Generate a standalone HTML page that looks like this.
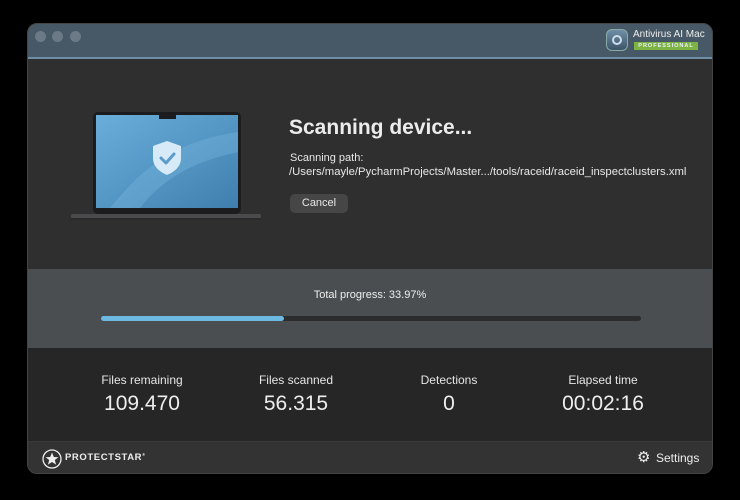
<!DOCTYPE html>
<html><head><style>
*{margin:0;padding:0;box-sizing:border-box}
body{width:740px;height:500px;background:#000;font-family:"Liberation Sans",sans-serif;color:#e8e8e8;position:relative;overflow:hidden}
.win{position:absolute;left:27px;top:23px;width:686px;height:451px;border-radius:10px;overflow:hidden;background:#2f2f2f;border:1px solid #444}
.title{position:absolute;left:0;top:0;width:100%;height:35px;background:#475966;border-bottom:2px solid #6d8ea6}
.dot{position:absolute;top:7px;width:11px;height:11px;border-radius:50%;background:#6b7a86}
.main{position:absolute;top:37px;left:0;width:100%;height:208px;background:#2f2f2f}
.prog{position:absolute;top:245px;left:0;width:100%;height:79px;background:#4a4e51}
.stats{position:absolute;top:324px;left:0;width:100%;height:93px;background:#262626}
.foot{position:absolute;top:417px;left:0;width:100%;height:34px;background:#333;border-top:1px solid #3a3a3a}
.col{position:absolute;top:25px;width:160px;text-align:center}
.col .l{font-size:12px;color:#e6e6e6}
.col .v{font-size:21px;margin-top:5px;color:#eee}
</style></head><body>
<div class="win">
 <div class="title">
  <div class="dot" style="left:7px"></div><div class="dot" style="left:24px"></div><div class="dot" style="left:42px"></div>
  <div style="position:absolute;left:578px;top:5px;width:22px;height:22px;border-radius:6px;background:linear-gradient(#6f8ea6,#3c5466);border:1px solid #8aa"></div>
  <div style="position:absolute;left:584px;top:11px;width:10px;height:10px;border-radius:50%;border:2px solid #cde"></div>
  <div style="position:absolute;left:605px;top:5px;font-size:10px;color:#eee">Antivirus AI Mac</div>
  <div style="position:absolute;left:606px;top:18px;width:64px;height:8px;background:#7cb342;color:#eef;font-size:5.5px;font-weight:bold;letter-spacing:1px;text-align:center;line-height:8px">PROFESSIONAL</div>
 </div>
 <div class="main">
  <svg style="position:absolute;left:42px;top:51px" width="192" height="112" viewBox="0 0 192 112">
   <defs><linearGradient id="g" x1="0" y1="0" x2="1" y2="1"><stop offset="0" stop-color="#6aaedb"/><stop offset="1" stop-color="#3f7fae"/></linearGradient></defs>
   <rect x="23" y="0" width="148" height="102" rx="5" fill="#1c1c1e"/>
   <rect x="26" y="3" width="142" height="93" fill="url(#g)"/>
   <path d="M40 96 C70 60 100 30 168 20 L168 40 C120 50 90 70 70 96Z" fill="#7ab9e2" opacity=".35"/>
   <rect x="89" y="3" width="17" height="4" fill="#1c1c1e"/>
   <rect x="1" y="102" width="190" height="5" rx="2" fill="#4a4a4d"/>
   <rect x="1" y="106" width="190" height="2" fill="#2a2a2a"/>
   <path d="M97 29 L111 34 V46 C111 55 104 60 97 63 C90 60 83 55 83 46 V34Z" fill="#d6eaf7"/>
   <path d="M91 46 L96 51 L104 42" fill="none" stroke="#5c9ccb" stroke-width="3" stroke-linecap="round" stroke-linejoin="round"/>
  </svg>
  <div style="position:absolute;left:261px;top:55px;font-size:21px;font-weight:bold;color:#ececec">Scanning device...</div>
  <div style="position:absolute;left:262px;top:91px;font-size:11px">Scanning path:</div>
  <div style="position:absolute;left:261px;top:105px;font-size:11.3px;white-space:nowrap">/Users/mayle/PycharmProjects/Master.../tools/raceid/raceid_inspectclusters.xml</div>
  <div style="position:absolute;left:262px;top:133px;width:58px;height:19px;border-radius:5px;background:#464646;font-size:11px;text-align:center;line-height:19px">Cancel</div>
 </div>
 <div class="prog">
  <div style="position:absolute;left:0;width:100%;top:20px;text-align:center;font-size:11px;color:#eee">Total progress: 33.97%</div>
  <div style="position:absolute;left:73px;top:47px;width:540px;height:5px;border-radius:3px;background:#2c2c2c"></div>
  <div style="position:absolute;left:73px;top:47px;width:183px;height:5px;border-radius:3px;background:#6cb9e2"></div>
 </div>
 <div class="stats">
  <div class="col" style="left:34px"><div class="l">Files remaining</div><div class="v">109.470</div></div>
  <div class="col" style="left:188px"><div class="l">Files scanned</div><div class="v">56.315</div></div>
  <div class="col" style="left:341px"><div class="l">Detections</div><div class="v">0</div></div>
  <div class="col" style="left:495px"><div class="l">Elapsed time</div><div class="v">00:02:16</div></div>
 </div>
 <div class="foot">
  <svg style="position:absolute;left:14px;top:7px" width="20" height="20" viewBox="0 0 20 20"><circle cx="10" cy="10" r="9" fill="none" stroke="#eee" stroke-width="1.3"/><path d="M10 3.5 L11.8 8 L16.5 8.2 L12.8 11 L14.1 15.6 L10 13 L5.9 15.6 L7.2 11 L3.5 8.2 L8.2 8Z" fill="#eee"/></svg>
  <div style="position:absolute;left:37px;top:10px;font-size:9.5px;font-weight:bold;letter-spacing:.6px;color:#eee">PROTECTSTAR<sup style="font-size:4px">®</sup></div>
  <div style="position:absolute;left:609px;top:6px;font-size:15px;color:#eee">⚙</div>
  <div style="position:absolute;left:628px;top:9px;font-size:12px;color:#eee">Settings</div>
 </div>
</div>
</body></html>
